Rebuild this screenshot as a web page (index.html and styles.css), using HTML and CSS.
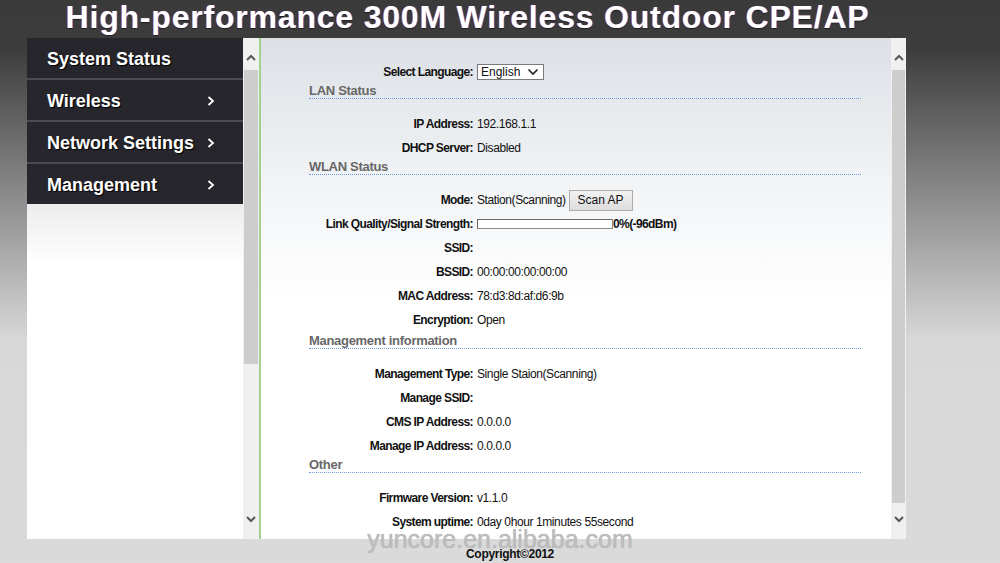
FILE: index.html
```html
<!DOCTYPE html>
<html>
<head>
<meta charset="utf-8">
<link rel="stylesheet" href="styles.css">
</head>
<body>
<header class="title">High-performance 300M Wireless Outdoor CPE/AP</header>
<div class="frame">
  <aside class="side">
    <nav class="menu">
      <a class="item">System Status</a>
      <a class="item">Wireless <svg class="chev" viewBox="0 0 8 10" width="8" height="10"><polyline points="1.5,1 6,5 1.5,9" /></svg></a>
      <a class="item">Network Settings <svg class="chev" viewBox="0 0 8 10" width="8" height="10"><polyline points="1.5,1 6,5 1.5,9" /></svg></a>
      <a class="item">Management <svg class="chev" viewBox="0 0 8 10" width="8" height="10"><polyline points="1.5,1 6,5 1.5,9" /></svg></a>
    </nav>
    <div class="side-fill"></div>
  </aside>
  <div class="vscroll vs-left">
    <div class="sb-up"><svg viewBox="0 0 10 7" width="10" height="7"><polyline points="1,6 5,2 9,6" /></svg></div>
    <div class="sb-thumb"></div>
    <div class="sb-track"></div>
    <div class="sb-down"><svg viewBox="0 0 10 7" width="10" height="7"><polyline points="1,1 5,5 9,1" /></svg></div>
  </div>
  <main class="content">
    <div class="row">
      <span class="lbl">Select Language:</span>
      <span class="val"><span class="select">English<svg viewBox="0 0 12 8" width="12" height="8"><polyline points="1.5,1.5 6,6 10.5,1.5" /></svg></span></span>
    </div>

    <section class="sec">
      <h2 class="sec-title">LAN Status</h2>
      <div class="row"><span class="lbl">IP Address:</span><span class="val">192.168.1.1</span></div>
      <div class="row"><span class="lbl">DHCP Server:</span><span class="val">Disabled</span></div>
    </section>

    <section class="sec sec-wlan">
      <h2 class="sec-title">WLAN Status</h2>
      <div class="row"><span class="lbl">Mode:</span><span class="val">Station(Scanning) <span class="btn">Scan AP</span></span></div>
      <div class="row"><span class="lbl">Link Quality/Signal Strength:</span><span class="val"><span class="bar"></span><b class="pct">0%(-96dBm)</b></span></div>
      <div class="row"><span class="lbl">SSID:</span><span class="val"></span></div>
      <div class="row"><span class="lbl">BSSID:</span><span class="val">00:00:00:00:00:00</span></div>
      <div class="row"><span class="lbl">MAC Address:</span><span class="val">78:d3:8d:af:d6:9b</span></div>
      <div class="row"><span class="lbl">Encryption:</span><span class="val">Open</span></div>
    </section>

    <section class="sec">
      <h2 class="sec-title">Management information</h2>
      <div class="row"><span class="lbl">Management Type:</span><span class="val">Single Staion(Scanning)</span></div>
      <div class="row"><span class="lbl">Manage SSID:</span><span class="val"></span></div>
      <div class="row"><span class="lbl">CMS IP Address:</span><span class="val">0.0.0.0</span></div>
      <div class="row"><span class="lbl">Manage IP Address:</span><span class="val">0.0.0.0</span></div>
    </section>

    <section class="sec">
      <h2 class="sec-title">Other</h2>
      <div class="row"><span class="lbl">Firmware Version:</span><span class="val">v1.1.0</span></div>
      <div class="row"><span class="lbl">System uptime:</span><span class="val">0day 0hour 1minutes 55second</span></div>
    </section>
  </main>
  <div class="vscroll vs-right">
    <div class="sb-up"><svg viewBox="0 0 10 7" width="10" height="7"><polyline points="1,6 5,2 9,6" /></svg></div>
    <div class="sb-thumb"></div>
    <div class="sb-down"><svg viewBox="0 0 10 7" width="10" height="7"><polyline points="1,1 5,5 9,1" /></svg></div>
  </div>
</div>
<footer class="foot">
  <span class="mark">yuncore.en.alibaba.com</span>
  <span class="copy">Copyright©2012</span>
</footer>
</body>
</html>
```
FILE: styles.css
```css
html, body {
  margin: 0;
  padding: 0;
}
body {
  width: 1000px;
  height: 563px;
  overflow: hidden;
  font-family: "Liberation Sans", Arial, sans-serif;
  background: linear-gradient(to bottom, #3a3a3a 0, #3d3d3d 50px, #d8d8d8 340px, #dadada 100%);
}
.title {
  margin: 0 0 0 27px;
  width: 881px;
  height: 38px;
  line-height: 35px;
  text-align: center;
  color: #fff;
  font-size: 32px;
  font-weight: bold;
  letter-spacing: 0.8px;
  white-space: nowrap;
  text-shadow: -1px 0 rgba(170, 60, 60, 0.7), 1px 0 rgba(60, 90, 200, 0.7), 0 1px 1px rgba(0, 0, 0, 0.5);
}
.frame {
  margin-left: 27px;
  width: 881px;
  height: 501px;
  display: flex;
}
.side {
  width: 216px;
  display: flex;
  flex-direction: column;
  background: #fff;
}
.menu {
  display: flex;
  flex-direction: column;
  background: #26262c;
}
.item {
  height: 40px;
  box-sizing: border-box;
  display: flex;
  align-items: center;
  justify-content: space-between;
  padding: 3px 28px 0 20px;
  color: #fff;
  font-size: 18px;
  font-weight: bold;
  text-shadow: 1px 1px 1px #000;
}
.item + .item {
  height: 42px;
  border-top: 2px solid #4b4b51;
}
.chev {
  flex: none;
  margin-top: -2px;
}
.chev polyline {
  fill: none;
  stroke: #fff;
  stroke-width: 1.8;
}
.side-fill {
  flex: 1;
  background: linear-gradient(to bottom, #ececec 0, #ffffff 60px);
}
.vscroll {
  display: flex;
  flex-direction: column;
  background: #f0f0f0;
}
.vs-left {
  width: 16px;
}
.vs-right {
  width: 15px;
}
.sb-up {
  height: 32px;
  display: flex;
  justify-content: center;
  align-items: flex-start;
  padding-top: 16px;
  box-sizing: border-box;
}
.sb-down {
  height: 36px;
  display: flex;
  justify-content: center;
  align-items: flex-start;
  padding-top: 13px;
  box-sizing: border-box;
}
.vscroll polyline {
  fill: none;
  stroke: #555;
  stroke-width: 2;
}
.sb-thumb {
  background: #cdcdcd;
  margin: 0 1px 0 1px;
}
.vs-left .sb-thumb {
  height: 294px;
}
.vs-right .sb-thumb {
  height: 433px;
}
.sb-track {
  flex: 1;
}
.content {
  width: 632px;
  border-left: 2px solid #a3d08e;
  padding: 21px 30px 0 48px;
  box-sizing: border-box;
  background: linear-gradient(to bottom, #dce0e5 0, #f2f4f6 150px, #ffffff 260px);
  font-size: 12px;
  color: #111;
  overflow: hidden;
}
.row {
  display: grid;
  grid-template-columns: 164px 1fr;
  column-gap: 4px;
  align-items: center;
  height: 24px;
  box-sizing: border-box;
  padding-top: 2px;
  line-height: 14px;
  white-space: nowrap;
}
.lbl {
  text-align: right;
  font-weight: bold;
  letter-spacing: -0.6px;
}
.val {
  display: flex;
  align-items: center;
  min-height: 14px;
  letter-spacing: -0.4px;
}
.select {
  display: inline-flex;
  align-items: center;
  justify-content: space-between;
  box-sizing: border-box;
  width: 67px;
  height: 16px;
  line-height: 14px;
  padding: 0 4px 0 3px;
  border: 1px solid #7a7a7a;
  background: #fff;
  font-size: 12px;
  letter-spacing: 0;
}
.select polyline {
  fill: none;
  stroke: #222;
  stroke-width: 1.6;
}
.btn {
  display: inline-block;
  box-sizing: border-box;
  width: 64px;
  height: 21px;
  line-height: 19px;
  margin-left: 3px;
  text-align: center;
  border: 1px solid #acacac;
  background: linear-gradient(to bottom, #f2f2f2, #dcdcdc);
  letter-spacing: 0;
}
.bar {
  display: inline-block;
  box-sizing: border-box;
  width: 136px;
  height: 10px;
  background: #fff;
  border: 1px solid #8a8a8a;
  border-top-color: #6a6a6a;
  border-left-color: #6a6a6a;
}
.pct {
  letter-spacing: -0.6px;
}
.sec-wlan {
  padding-bottom: 2px;
}
.sec-title {
  margin: 0 0 12px 0;
  height: 15px;
  line-height: 15px;
  font-size: 13px;
  font-weight: bold;
  color: #676767;
  letter-spacing: -0.3px;
  border-bottom: 1px dotted #6a9de0;
}
.foot {
  position: relative;
  height: 24px;
  text-align: center;
  padding-left: 20px;
}
.copy {
  display: inline-block;
  font-size: 12px;
  font-weight: bold;
  color: #111;
  letter-spacing: -0.3px;
  line-height: 12px;
  padding-top: 9px;
}
.mark {
  position: absolute;
  left: 0;
  right: 0;
  top: -9px;
  text-align: center;
  font-size: 25px;
  line-height: 18px;
  color: #bdbdbd;
  text-shadow: 0 0 1px #aaa;
  pointer-events: none;
}
```
